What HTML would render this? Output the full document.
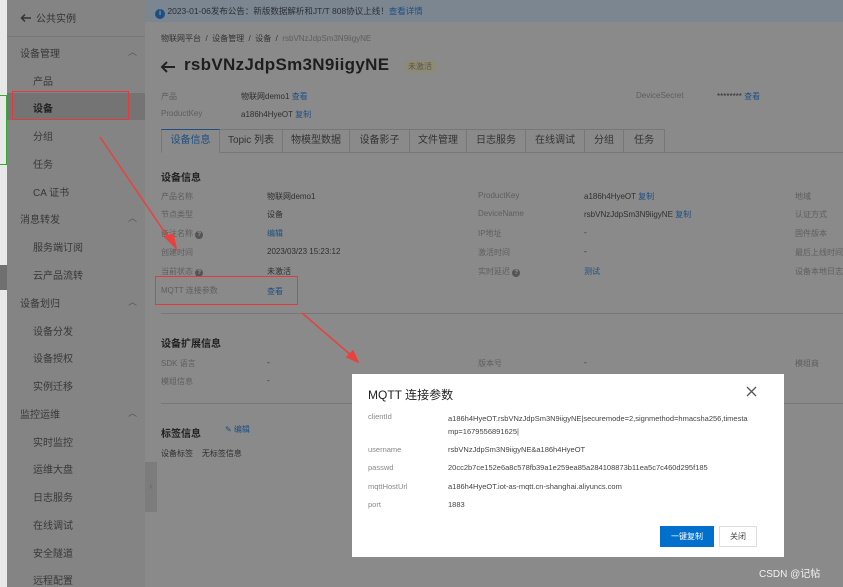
<!DOCTYPE html><html><head><meta charset="utf-8"><style>
*{margin:0;padding:0;box-sizing:border-box}
body{width:843px;height:587px;overflow:hidden;position:relative;background:#8a8a8a;font-family:"Liberation Sans","Noto Sans CJK SC",sans-serif;font-size:8px;color:#2f2f2f}
.a{position:absolute;white-space:nowrap}
.l{color:#5e5e5e}.k{color:#1d4f82}
.sb{position:absolute;left:7px;top:0;width:138px;height:587px;background:#848484}
.mi{position:absolute;left:33px;font-size:10px;color:#383838}
.mg{position:absolute;left:20px;font-size:10px;color:#383838}
.car{position:absolute;left:128px;font-size:9px;color:#555}
.tab{position:absolute;top:129px;height:24px;border:1px solid #777;border-left:none;font-size:10px;color:#333;text-align:center;line-height:22px}
.q{display:inline-block;width:8px;height:8px;border-radius:50%;background:#555;color:#999;font-size:6px;text-align:center;line-height:8px;font-weight:bold}
</style></head><body>
<div class="a" style="left:0;top:0;width:7px;height:587px;background:#e8e8e8"></div>
<div class="a" style="left:0;top:95px;width:7px;height:70px;border:1.5px solid #3a3;border-left:none"></div>
<div class="a" style="left:0;top:265px;width:7px;height:25px;background:#707070"></div>
<div class="sb"></div>
<div class="a" style="left:7px;top:36px;width:138px;height:1px;background:#777"></div>
<svg class="a" style="left:20px;top:13px" width="12" height="10"><path d="M11 5H2M5 1.5L1.5 5L5 8.5" stroke="#333" stroke-width="1.5" fill="none"/></svg>
<div class="a" style="left:36px;top:10px;font-size:10px;color:#333">公共实例</div>
<div class="a" style="left:7px;top:93px;width:138px;height:27px;background:#747474"></div>
<div class="mg" style="top:45px">设备管理</div><div class="car" style="top:45px">︿</div>
<div class="mi" style="top:73px">产品</div>
<div class="mi" style="top:100px;font-weight:bold;color:#222">设备</div>
<div class="mi" style="top:128px">分组</div>
<div class="mi" style="top:156px">任务</div>
<div class="mi" style="top:184px">CA 证书</div>
<div class="mg" style="top:211px">消息转发</div><div class="car" style="top:211px">︿</div>
<div class="mi" style="top:239px">服务端订阅</div>
<div class="mi" style="top:267px">云产品流转</div>
<div class="mg" style="top:295px">设备划归</div><div class="car" style="top:295px">︿</div>
<div class="mi" style="top:323px">设备分发</div>
<div class="mi" style="top:350px">设备授权</div>
<div class="mi" style="top:378px">实例迁移</div>
<div class="mg" style="top:406px">监控运维</div><div class="car" style="top:406px">︿</div>
<div class="mi" style="top:434px">实时监控</div>
<div class="mi" style="top:461px">运维大盘</div>
<div class="mi" style="top:489px">日志服务</div>
<div class="mi" style="top:517px">在线调试</div>
<div class="mi" style="top:545px">安全隧道</div>
<div class="mi" style="top:572px">远程配置</div>
<div class="a" style="left:145px;top:462px;width:12px;height:50px;background:#7c7c7c;color:#666;font-size:10px;line-height:50px;text-align:center">‹</div>
<div class="a" style="left:145px;top:0;width:698px;height:22px;background:#7b8691"></div>
<div class="a" style="left:155px;top:5px;font-size:8.5px;color:#2b2f35"><span style="display:inline-block;width:10px;height:10px;border-radius:50%;background:#1d4f82;color:#ccc;font-size:7px;text-align:center;line-height:10px;vertical-align:-1px">i</span> 2023-01-06发布公告：新版数据解析和JT/T 808协议上线！<span class="k">查看详情</span></div>
<div class="a" style="left:161px;top:33px;color:#333">物联网平台 &nbsp;/&nbsp; 设备管理 &nbsp;/&nbsp; 设备 &nbsp;/&nbsp; <span class="l">rsbVNzJdpSm3N9iigyNE</span></div>
<svg class="a" style="left:160px;top:60px" width="16" height="14"><path d="M15 7H2M7 2L2 7L7 12" stroke="#222" stroke-width="2" fill="none"/></svg>
<div class="a" style="left:184px;top:55px;font-size:17px;font-weight:bold;color:#1e1e1e;letter-spacing:0.3px">rsbVNzJdpSm3N9iigyNE</div>
<div class="a" style="left:403px;top:60px;padding:1px 5px;background:#8e8a78;border-radius:7px;color:#5a5540;font-size:8px">未激活</div>
<div class="a l" style="left:161px;top:91px">产品</div><div class="a" style="left:241px;top:91px">物联网demo1 <span class="k">查看</span></div>
<div class="a l" style="left:636px;top:91px">DeviceSecret</div><div class="a" style="left:717px;top:91px">******** <span class="k">查看</span></div>
<div class="a l" style="left:161px;top:109px">ProductKey</div><div class="a" style="left:241px;top:109px">a186h4HyeOT <span class="k">复制</span></div>
<div class="a" style="left:161px;top:152px;width:682px;height:1px;background:#777"></div>
<div class="tab" style="left:161px;width:59px;border-left:1px solid #777;border-top:1.5px solid #1d4f82;border-bottom-color:#8a8a8a;color:#1d4f82">设备信息</div>
<div class="tab" style="left:220px;width:63px">Topic 列表</div>
<div class="tab" style="left:283px;width:67px">物模型数据</div>
<div class="tab" style="left:350px;width:60px">设备影子</div>
<div class="tab" style="left:410px;width:57px">文件管理</div>
<div class="tab" style="left:467px;width:59px">日志服务</div>
<div class="tab" style="left:526px;width:59px">在线调试</div>
<div class="tab" style="left:585px;width:39px">分组</div>
<div class="tab" style="left:624px;width:41px">任务</div>
<div class="a" style="left:161px;top:169px;font-size:10px;font-weight:bold;color:#222">设备信息</div>
<div class="a l" style="left:161px;top:191px">产品名称</div><div class="a" style="left:267px;top:191px">物联网demo1</div>
<div class="a l" style="left:161px;top:209px">节点类型</div><div class="a" style="left:267px;top:209px">设备</div>
<div class="a l" style="left:161px;top:228px">备注名称 <b class="q">?</b></div><div class="a k" style="left:267px;top:228px">编辑</div>
<div class="a l" style="left:161px;top:247px">创建时间</div><div class="a" style="left:267px;top:247px">2023/03/23 15:23:12</div>
<div class="a l" style="left:161px;top:266px">当前状态 <b class="q">?</b></div><div class="a" style="left:267px;top:266px">未激活</div>
<div class="a l" style="left:161px;top:285px">MQTT 连接参数</div><div class="a k" style="left:267px;top:286px">查看</div>
<div class="a l" style="left:478px;top:191px">ProductKey</div><div class="a" style="left:584px;top:191px">a186h4HyeOT <span class="k">复制</span></div>
<div class="a l" style="left:478px;top:209px">DeviceName</div><div class="a" style="left:584px;top:209px">rsbVNzJdpSm3N9iigyNE <span class="k">复制</span></div>
<div class="a l" style="left:478px;top:228px">IP地址</div><div class="a" style="left:584px;top:228px">-</div>
<div class="a l" style="left:478px;top:247px">激活时间</div><div class="a" style="left:584px;top:247px">-</div>
<div class="a l" style="left:478px;top:266px">实时延迟 <b class="q">?</b></div><div class="a k" style="left:584px;top:266px">测试</div>
<div class="a l" style="left:795px;top:191px">地域</div>
<div class="a l" style="left:795px;top:209px">认证方式</div>
<div class="a l" style="left:795px;top:228px">固件版本</div>
<div class="a l" style="left:795px;top:247px">最后上线时间</div>
<div class="a l" style="left:795px;top:266px">设备本地日志</div>
<div class="a" style="left:161px;top:313px;width:682px;height:1px;background:#777"></div>
<div class="a" style="left:161px;top:335px;font-size:10px;font-weight:bold;color:#222">设备扩展信息</div>
<div class="a l" style="left:161px;top:358px">SDK 语言</div><div class="a" style="left:267px;top:358px">-</div>
<div class="a l" style="left:478px;top:358px">版本号</div><div class="a" style="left:584px;top:358px">-</div>
<div class="a l" style="left:795px;top:358px">模组商</div>
<div class="a l" style="left:161px;top:376px">模组信息</div><div class="a" style="left:267px;top:376px">-</div>
<div class="a" style="left:161px;top:403px;width:682px;height:1px;background:#777"></div>
<div class="a" style="left:161px;top:425px;font-size:10px;font-weight:bold;color:#222">标签信息</div>
<div class="a k" style="left:225px;top:424px">✎ 编辑</div>
<div class="a" style="left:161px;top:448px">设备标签 &nbsp; &nbsp;无标签信息</div>
<div class="a" style="left:12px;top:91px;width:117px;height:29px;border:1.5px solid #e23b3b"></div>
<div class="a" style="left:155px;top:276px;width:143px;height:29px;border:1.5px solid #e23b3b"></div>
<svg class="a" style="left:0;top:0" width="843" height="587"><g stroke="#e8413e" stroke-width="1.5" fill="#e8413e"><line x1="100" y1="137" x2="170" y2="240"/><polygon points="165,237 176,248 173,234"/><line x1="302" y1="313" x2="352" y2="356"/><polygon points="347,357 358,362 353,351"/></g></svg>
<div class="a" style="left:352px;top:374px;width:432px;height:183px;background:#fff"></div>
<div class="a" style="left:368px;top:386px;font-size:12px;color:#222">MQTT 连接参数</div>
<svg class="a" style="left:746px;top:386px" width="11" height="11"><path d="M1 1L10 10M10 1L1 10" stroke="#555" stroke-width="1.3"/></svg>
<div class="a" style="left:368px;top:412px;font-size:7.5px;color:#888">clientId</div>
<div class="a" style="left:448px;top:412px;font-size:7.5px;color:#444;line-height:13px">a186h4HyeOT.rsbVNzJdpSm3N9iigyNE|securemode=2,signmethod=hmacsha256,timesta<br>mp=1679556891625|</div>
<div class="a" style="left:368px;top:445px;font-size:7.5px;color:#888">username</div><div class="a" style="left:448px;top:445px;font-size:7.5px;color:#444">rsbVNzJdpSm3N9iigyNE&amp;a186h4HyeOT</div>
<div class="a" style="left:368px;top:463px;font-size:7.5px;color:#888">passwd</div><div class="a" style="left:448px;top:463px;font-size:7.5px;color:#444">20cc2b7ce152e6a8c578fb39a1e259ea85a284108873b11ea5c7c460d295f185</div>
<div class="a" style="left:368px;top:482px;font-size:7.5px;color:#888">mqttHostUrl</div><div class="a" style="left:448px;top:482px;font-size:7.5px;color:#444">a186h4HyeOT.iot-as-mqtt.cn-shanghai.aliyuncs.com</div>
<div class="a" style="left:368px;top:500px;font-size:7.5px;color:#888">port</div><div class="a" style="left:448px;top:500px;font-size:7.5px;color:#444">1883</div>
<div class="a" style="left:660px;top:526px;width:54px;height:21px;background:#0070cc;color:#fff;font-size:8px;text-align:center;line-height:21px">一键复制</div>
<div class="a" style="left:719px;top:526px;width:38px;height:21px;border:1px solid #ddd;color:#444;font-size:8px;text-align:center;line-height:19px">关闭</div>
<div class="a" style="left:759px;top:565px;font-size:10px;color:#f2f2f2">CSDN @记帖</div>
</body></html>
